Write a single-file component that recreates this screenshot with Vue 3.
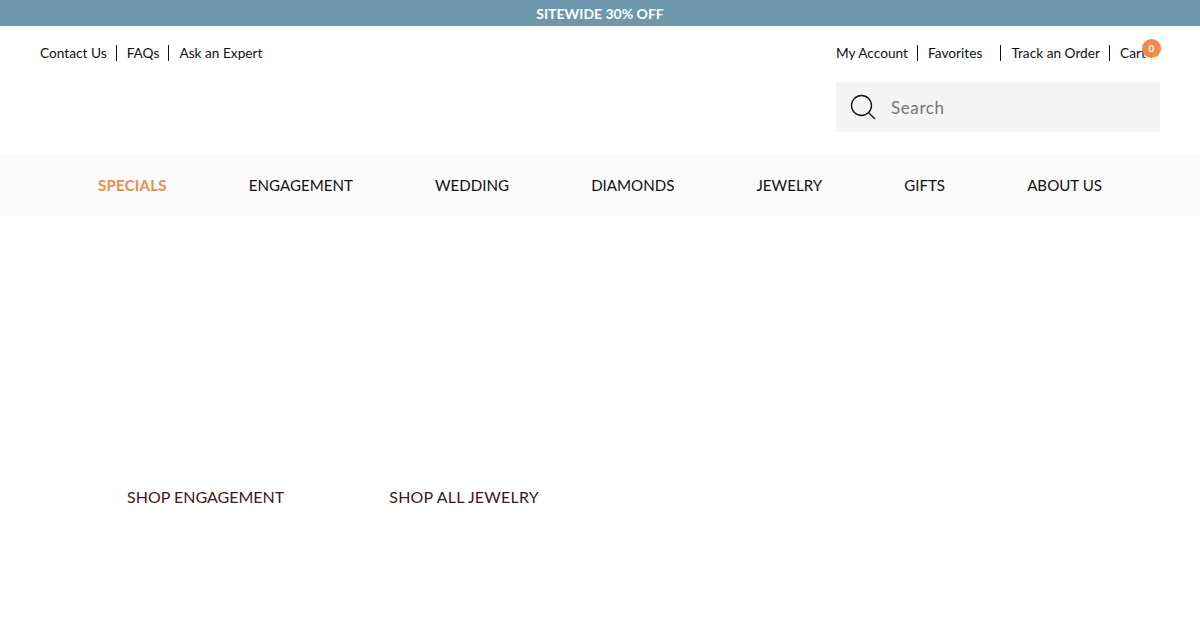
<script setup>
const leftLinks = ['Contact Us', 'FAQs', 'Ask an Expert']
const navItems = ['SPECIALS', 'ENGAGEMENT', 'WEDDING', 'DIAMONDS', 'JEWELRY', 'GIFTS', 'ABOUT US']
</script>

<template>
  <div class="page">
    <div class="promo">SITEWIDE 30% OFF</div>

    <header class="header">
      <div class="util-row">
        <ul class="util-links">
          <li v-for="link in leftLinks" :key="link">{{ link }}</li>
        </ul>
        <ul class="util-links right">
          <li>My Account</li>
          <li class="favorites">Favorites</li>
          <li>Track an Order</li>
          <li class="cart">Cart<span class="badge">0</span></li>
        </ul>
      </div>
      <div class="search-row">
        <div class="search">
          <svg class="search-icon" width="26" height="26" viewBox="0 0 26 26" fill="none" stroke="#111" stroke-width="1.3">
            <circle cx="11.5" cy="11.5" r="10" />
            <path d="M18.6 18.8 25 25" />
          </svg>
          <span class="placeholder">Search</span>
        </div>
      </div>
    </header>

    <nav class="nav">
      <a v-for="(item, i) in navItems" :key="item" class="nav-item" :class="{ active: i === 0 }">{{ item }}</a>
    </nav>

    <section class="hero">
      <a class="shop-link">SHOP ENGAGEMENT</a>
      <a class="shop-link">SHOP ALL JEWELRY</a>
    </section>
  </div>
</template>

<style>
html, body {
  margin: 0;
  background: #fff;
}
</style>

<style scoped>
.page {
  width: 1200px;
  height: 630px;
  overflow: hidden;
  background: #fff;
  font-family: Lato, "Open Sans", sans-serif;
  color: #111;
}

.promo {
  height: 26px;
  line-height: 27px;
  background: #6d97aa;
  color: #fff;
  text-align: center;
  font-size: 14px;
  font-weight: 700;
}

.header {
  padding: 0 40px;
  height: 128px;
  box-sizing: border-box;
}

.util-row {
  display: flex;
  justify-content: space-between;
  padding-top: 19px;
}

.util-links {
  display: flex;
  margin: 0;
  padding: 0;
  list-style: none;
  font-size: 13.7px;
  line-height: 16px;
}

.util-links li {
  padding-right: 9px;
  margin-right: 10px;
  border-right: 1px solid #111;
}

.util-links li:last-child {
  padding-right: 0;
  margin-right: 0;
  border-right: 0;
}

.util-links .favorites {
  padding-right: 18px;
}

.cart {
  position: relative;
  width: 40px;
  box-sizing: border-box;
}

.badge {
  position: absolute;
  top: -6px;
  left: 22px;
  width: 19px;
  height: 19px;
  border-radius: 50%;
  background: #ee8d4b;
  color: #fff;
  font-size: 10px;
  font-weight: 700;
  line-height: 19px;
  text-align: center;
}

.search-row {
  display: flex;
  justify-content: flex-end;
  padding-top: 21px;
}

.search {
  display: flex;
  align-items: center;
  width: 324px;
  height: 50px;
  background: #f4f4f4;
  padding-left: 14px;
  box-sizing: border-box;
}

.search-icon {
  flex: none;
  margin-right: 15px;
}

.placeholder {
  color: #777;
  font-size: 17px;
  letter-spacing: 0.6px;
}

.nav {
  display: flex;
  justify-content: space-between;
  align-items: center;
  height: 62px;
  padding: 0 98px;
  box-sizing: border-box;
  background: #fafafa;
  font-size: 15.1px;
}

.nav-item {
  color: #111;
}

.nav-item.active {
  color: #ee8d4b;
  font-weight: 700;
  letter-spacing: 0.2px;
}

.hero {
  display: flex;
  gap: 105px;
  padding: 271px 0 0 127px;
}

.shop-link {
  color: #3a1a20;
  font-size: 16px;
  line-height: 20px;
}

.shop-link + .shop-link {
  letter-spacing: 0.2px;
}
</style>
